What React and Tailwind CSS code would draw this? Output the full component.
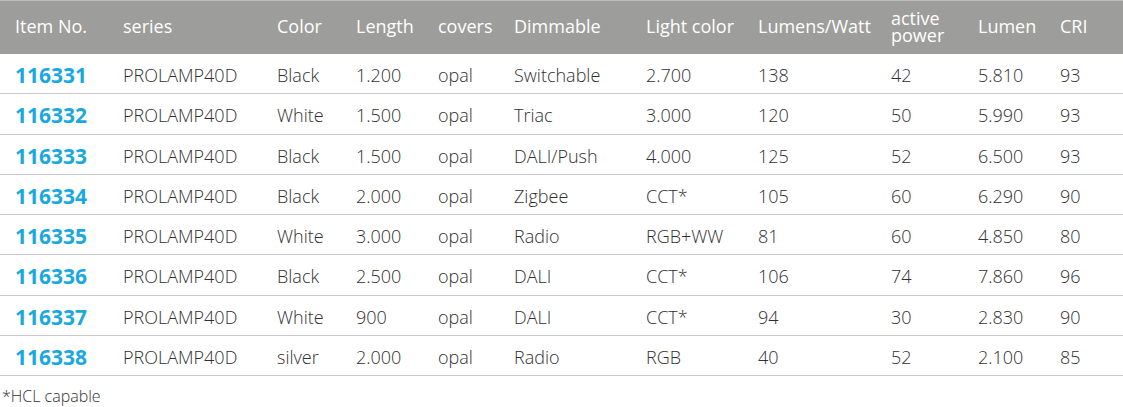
import React from 'react';

const cols = [
  { key: 'item', label: 'Item No.', w: 108 },
  { key: 'series', label: 'series', w: 154 },
  { key: 'color', label: 'Color', w: 79 },
  { key: 'length', label: 'Length', w: 82 },
  { key: 'covers', label: 'covers', w: 76 },
  { key: 'dim', label: 'Dimmable', w: 132 },
  { key: 'light', label: 'Light color', w: 112 },
  { key: 'lmw', label: 'Lumens/Watt', w: 133 },
  { key: 'power', label: 'active power', w: 87 },
  { key: 'lumen', label: 'Lumen', w: 82 },
  { key: 'cri', label: 'CRI', w: 78 },
];

const rows = [
  ['116331', 'PROLAMP40D', 'Black', '1.200', 'opal', 'Switchable', '2.700', '138', '42', '5.810', '93'],
  ['116332', 'PROLAMP40D', 'White', '1.500', 'opal', 'Triac', '3.000', '120', '50', '5.990', '93'],
  ['116333', 'PROLAMP40D', 'Black', '1.500', 'opal', 'DALI/Push', '4.000', '125', '52', '6.500', '93'],
  ['116334', 'PROLAMP40D', 'Black', '2.000', 'opal', 'Zigbee', 'CCT*', '105', '60', '6.290', '90'],
  ['116335', 'PROLAMP40D', 'White', '3.000', 'opal', 'Radio', 'RGB+WW', '81', '60', '4.850', '80'],
  ['116336', 'PROLAMP40D', 'Black', '2.500', 'opal', 'DALI', 'CCT*', '106', '74', '7.860', '96'],
  ['116337', 'PROLAMP40D', 'White', '900', 'opal', 'DALI', 'CCT*', '94', '30', '2.830', '90'],
  ['116338', 'PROLAMP40D', 'silver', '2.000', 'opal', 'Radio', 'RGB', '40', '52', '2.100', '85'],
];

export default function App() {
  return (
    <div className="w-[1123px] bg-white" style={{ fontFamily: '"Open Sans", Lato, sans-serif' }}>
      <table className="w-full table-fixed border-collapse">
        <colgroup>
          {cols.map((c) => (
            <col key={c.key} style={{ width: c.w }} />
          ))}
        </colgroup>
        <thead>
          <tr className="h-[53px] bg-[#9d9d9b] border-t border-[#bdbdbb]">
            {cols.map((c) => (
              <th
                key={c.key}
                className="pl-[15px] pr-1 pb-[1px] text-left align-middle font-normal text-white text-[18px] leading-[17px]"
              >
                {c.label}
              </th>
            ))}
          </tr>
        </thead>
        <tbody>
          {rows.map((r) => (
            <tr key={r[0]} className="h-[40.25px] border-b border-[#cacaca]">
              {r.map((v, i) => (
                <td
                  key={i}
                  className={
                    i === 0
                      ? 'pl-[15px] pt-[3px] align-middle text-[21px] leading-[24px] font-bold text-[#19a8e0]'
                      : 'pl-[15px] pt-[3px] align-middle text-[18px] leading-[24px] font-light text-[#2f2f2f]'
                  }
                >
                  {v}
                </td>
              ))}
            </tr>
          ))}
        </tbody>
      </table>
      <p className="pl-[2px] pt-[10px] text-[16px] leading-[20px] font-light text-[#333333]">*HCL capable</p>
    </div>
  );
}
